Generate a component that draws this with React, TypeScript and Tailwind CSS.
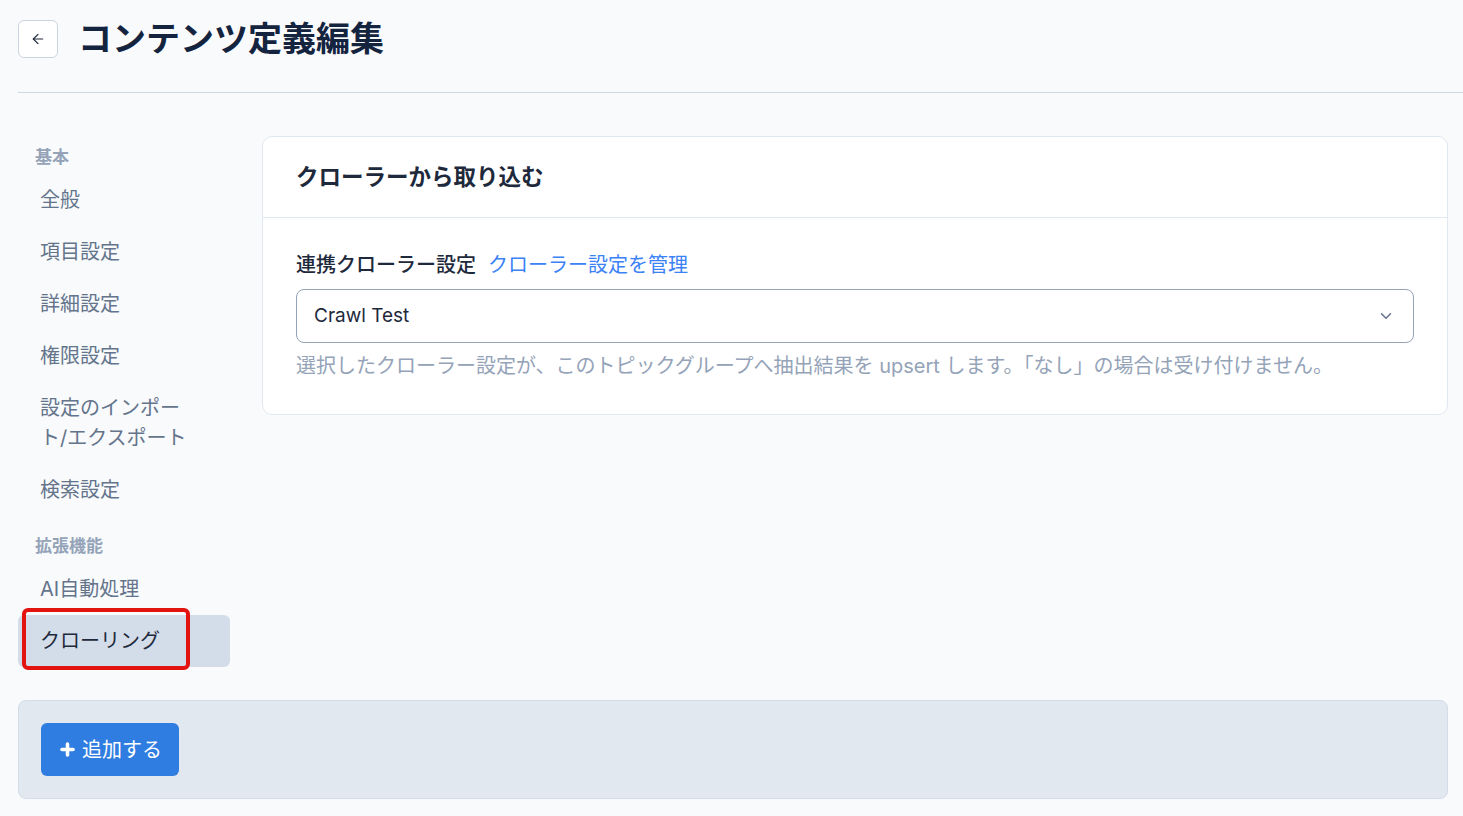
import { ArrowLeft, ChevronDown, Plus } from "lucide-react";

const FONT = { fontFamily: 'Inter, "Noto Sans CJK JP", sans-serif' };

type NavItem = { label: string; active?: boolean };

const sections: { title: string; items: NavItem[] }[] = [
  {
    title: "基本",
    items: [
      { label: "全般" },
      { label: "項目設定" },
      { label: "詳細設定" },
      { label: "権限設定" },
      { label: "設定のインポート/エクスポート" },
      { label: "検索設定" },
    ],
  },
  {
    title: "拡張機能",
    items: [{ label: "AI自動処理" }, { label: "クローリング", active: true }],
  },
];

function Sidebar() {
  return (
    <nav className="w-[212px] shrink-0 pt-[9px]">
      {sections.map((s, i) => (
        <div key={s.title} className={i > 0 ? "mt-[18px]" : ""}>
          <div className="pl-[17px] mb-[5px] text-[17px] leading-[24px] font-bold text-[#94a3b8]">
            {s.title}
          </div>
          <ul>
            {s.items.map((it) => (
              <li key={it.label} className="relative">
                <div
                  className={`rounded-[6px] pl-[22px] pr-[40px] py-[11px] text-[20px] leading-[30px] ${
                    it.active ? "bg-[#d3dde9] text-[#1e293b]" : "text-[#64748b]"
                  }`}
                >
                  {it.label}
                </div>
                {it.active && (
                  // red highlight drawn over the active item in the capture
                  <div className="absolute left-[4px] top-[-7px] w-[168px] h-[62px] rounded-[6px] border-[4px] border-[#e3140f] pointer-events-none" />
                )}
              </li>
            ))}
          </ul>
        </div>
      ))}
    </nav>
  );
}

function CrawlerCard() {
  return (
    <section className="flex-1 bg-white border border-[#e2e8f0] rounded-[10px]">
      <div className="px-[33px] h-[81px] flex items-center border-b border-[#e2e8f0]">
        <h2 className="text-[22.5px] font-bold text-[#1e293b]">クローラーから取り込む</h2>
      </div>
      <div className="px-[33px] pt-[32px] pb-[33px]">
        <div className="flex items-center gap-[12px] text-[20px] leading-[30px]">
          <span className="font-medium text-[#1e293b]">連携クローラー設定</span>
          <a className="text-[#3b82f6] cursor-pointer">クローラー設定を管理</a>
        </div>
        <div className="mt-[9px] h-[54px] border border-[#94a3b8] rounded-[8px] flex items-center justify-between pl-[17px] pr-[18px]">
          <span className="text-[19px] text-[#1e293b]">Crawl Test</span>
          <ChevronDown className="w-[18px] h-[18px] text-[#64748b]" strokeWidth={2} />
        </div>
        <p className="mt-[8px] text-[20px] leading-[30px] text-[#94a3b8]">
          選択したクローラー設定が、このトピックグループへ抽出結果を upsert します。「なし」の場合は受け付けません。
        </p>
      </div>
    </section>
  );
}

export default function App() {
  return (
    <div className="min-h-[816px] bg-[#f8fafc] pl-[18px] pr-[15px]" style={FONT}>
      <header className="pt-[20px] pb-[34px] border-b border-[#cbd9e8] mr-[-15px] flex items-center gap-[20px]">
        <button
          type="button"
          className="w-[40px] h-[38px] flex items-center justify-center bg-white border border-[#cbd5e1] rounded-[6px] text-[#1e293b]"
        >
          <ArrowLeft className="w-[16px] h-[16px]" strokeWidth={1.75} />
        </button>
        <h1 className="text-[34px] leading-[38px] font-bold text-[#14243f]">コンテンツ定義編集</h1>
      </header>

      <div className="flex items-start gap-[32px] pt-[43px]">
        <Sidebar />
        <CrawlerCard />
      </div>

      <div className="mt-[33px] bg-[#e2e8f0] border border-[#d3dce8] rounded-[8px] px-[22px] py-[22px]">
        <button
          type="button"
          className="h-[53px] px-[17px] flex items-center gap-[5px] bg-[#2f7de1] rounded-[6px] text-white text-[20px]"
        >
          <Plus className="w-[19px] h-[19px]" strokeWidth={4.5} />
          追加する
        </button>
      </div>
    </div>
  );
}
